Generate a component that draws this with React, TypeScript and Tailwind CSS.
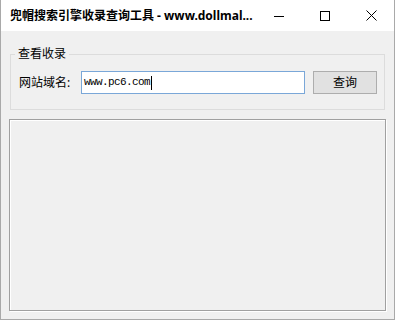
const cjk = { fontFamily: '"Noto Sans", "Noto Sans CJK SC", sans-serif' };

function TitleBar() {
    return (
        <div className="flex h-[31px] items-center bg-white">
            <div className="flex-1 pl-[9px] text-[12px] font-bold text-black whitespace-nowrap" style={cjk}>
                兜帽搜索引擎收录查询工具 - www.dollmal...
            </div>
            <div className="flex h-full">
                <div className="flex w-[46px] items-center justify-center">
                    <svg width="10" height="10" viewBox="0 0 10 10">
                        <path d="M0 5.5h10" stroke="#000" strokeWidth="1" />
                    </svg>
                </div>
                <div className="flex w-[46px] items-center justify-center">
                    <svg width="10" height="10" viewBox="0 0 10 10">
                        <rect x="0.5" y="0.5" width="9" height="9" fill="none" stroke="#000" strokeWidth="1" />
                    </svg>
                </div>
                <div className="flex w-[46px] items-center justify-center">
                    <svg width="11" height="11" viewBox="0 0 11 11">
                        <path d="M0.5 0.5l10 10M10.5 0.5l-10 10" stroke="#000" strokeWidth="1" />
                    </svg>
                </div>
            </div>
        </div>
    );
}

export default function App() {
    return (
        <div className="flex h-[320px] w-[395px] flex-col border-x border-b border-[#a9a9a9] bg-[#f0f0f0]" style={cjk}>
            <TitleBar />

            <fieldset className="ml-[9px] mr-[9px] mt-[15px] border border-[#dcdcdc] pb-[15px] pl-[4px] pt-[9px]">
                <legend className="px-[3px] text-[12px] leading-[16px] text-black">查看收录</legend>
                <div className="flex items-center pl-[4px]">
                    <span className="w-[62px] text-[12px] leading-[16px] text-black">网站域名:</span>
                    <div className="flex h-[23px] w-[224px] items-center border border-[#7aa7d8] bg-white pl-[2px]">
                        <span
                            className="text-[11px] tracking-[-0.6px] text-black"
                            style={{ fontFamily: '"Liberation Mono", monospace' }}
                        >
                            www.pc6.com
                        </span>
                        <span className="ml-[1px] h-[14px] w-px bg-black" />
                    </div>
                    <button className="ml-[8px] h-[23px] w-[64px] border border-[#adadad] bg-[#e1e1e1] text-[12px] text-black">
                        查询
                    </button>
                </div>
            </fieldset>

            <div className="mx-[8px] mb-[8px] mt-[9px] flex-1 border border-[#a0a0a0] shadow-[inset_1px_1px_0_#fff,1px_1px_0_#fff]" />
        </div>
    );
}
